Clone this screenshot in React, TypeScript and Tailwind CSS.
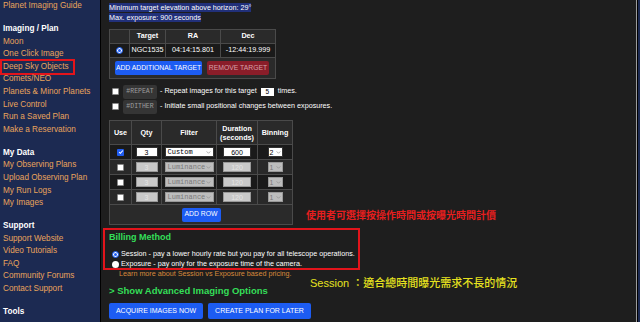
import { type ReactNode } from 'react'

const navGroups: { title?: string; items: string[] }[] = [
  { items: ['Planet Imaging Guide'] },
  {
    title: 'Imaging / Plan',
    items: [
      'Moon',
      'One Click Image',
      'Deep Sky Objects',
      'Comets/NEO',
      'Planets & Minor Planets',
      'Live Control',
      'Run a Saved Plan',
      'Make a Reservation',
    ],
  },
  {
    title: 'My Data',
    items: ['My Observing Plans', 'Upload Observing Plan', 'My Run Logs', 'My Images'],
  },
  {
    title: 'Support',
    items: ['Support Website', 'Video Tutorials', 'FAQ', 'Community Forums', 'Contact Support'],
  },
  { title: 'Tools', items: [] },
]

const filterRows = [
  { on: true, qty: '3', filter: 'Custom', dur: '600', bin: '2', bg: 'bg-[#1a1a1a]' },
  { on: false, qty: '3', filter: 'Luminance', dur: '120', bin: '1', bg: 'bg-[#292929]' },
  { on: false, qty: '3', filter: 'Luminance', dur: '120', bin: '1', bg: 'bg-[#1a1a1a]' },
  { on: false, qty: '3', filter: 'Luminance', dur: '120', bin: '1', bg: 'bg-[#292929]' },
]

function Sidebar() {
  return (
    <aside className="w-[101px] shrink-0 border-r border-black bg-[#1c2a52] pl-[3px] text-[8.2px] leading-[12.6px]">
      {navGroups.map((g, gi) => (
        <div key={gi} className={gi === 0 ? '' : 'mt-[10.4px]'}>
          {g.title && <div className="font-bold text-white">{g.title}</div>}
          {g.items.map((it) => (
            <div key={it} className="relative whitespace-nowrap text-[#e9a45c]">
              {it}
              {it === 'Deep Sky Objects' && (
                <span className="absolute -left-[3px] -top-[2px] h-[16px] w-[75px] border-2 border-[#e3141b]" />
              )}
            </div>
          ))}
        </div>
      ))}
    </aside>
  )
}

function Checkbox({ on }: { on: boolean }) {
  if (on)
    return (
      <span className="inline-flex h-[7px] w-[7px] items-center justify-center rounded-[1px] bg-[#1f5cf0]">
        <svg viewBox="0 0 8 8" className="h-[6px] w-[6px]">
          <path d="M1.5 4.2 L3.2 5.8 L6.5 2" stroke="white" strokeWidth="1.4" fill="none" />
        </svg>
      </span>
    )
  return <span className="inline-block h-[7px] w-[7px] rounded-[1px] border border-[#888] bg-white" />
}

function Radio({ on }: { on: boolean }) {
  return on ? (
    <span className="inline-block h-[7px] w-[7px] rounded-full border-[1.5px] border-[#2f6df5] bg-[#1f5cf0] ring-1 ring-white ring-inset" />
  ) : (
    <span className="inline-block h-[7px] w-[7px] rounded-full bg-white" />
  )
}

function Field({ children, on, className }: { children: ReactNode; on: boolean; className: string }) {
  return (
    <span
      className={`flex h-[10px] items-center justify-center border text-[7px] leading-none ${
        on ? 'border-[#333] bg-white text-black' : 'border-[#999] bg-[#c9c9c9] text-[#e4e4e4]'
      } ${className}`}
    >
      {children}
    </span>
  )
}

function Select({ value, on, className }: { value: string; on: boolean; className: string }) {
  return (
    <span
      className={`flex h-[10px] items-center justify-between border px-[2px] font-['Liberation_Mono',monospace] text-[7px] leading-none ${
        on ? 'border-[#333] bg-white text-black' : 'border-[#999] bg-[#bdbdbd] text-[#7a7a7a]'
      } ${className}`}
    >
      <span>{value}</span>
      <svg viewBox="0 0 6 4" className="h-[3px] w-[5px]">
        <path d="M0.5 0.5 L3 3 L5.5 0.5" stroke={on ? '#777' : '#888'} strokeWidth="0.8" fill="none" />
      </svg>
    </span>
  )
}

function Tag({ children }: { children: string }) {
  return (
    <span className="flex h-[14px] w-[34px] items-center justify-center rounded-[2px] bg-[#353535] font-['Liberation_Mono',monospace] text-[6.5px] text-[#9d9d9d]">
      {children}
    </span>
  )
}

export default function App() {
  return (
    <div className="flex h-[322px] w-[640px] overflow-hidden font-['Liberation_Sans',Arial,sans-serif]">
      <Sidebar />
      <main className="relative flex-1 bg-[#1e1e1e] pl-[8px] pt-[2.5px] text-[7.2px] text-white">
        <div className="leading-[10px]">
          <div>
            <span className="bg-[#21307a]">Minimum target elevation above horizon: 29°</span>
          </div>
          <div>
            <span className="bg-[#21307a]">Max. exposure: 900 seconds</span>
          </div>
        </div>

        <table className="mt-[6.5px] w-[166px] table-fixed border-collapse border border-[#4a4a4a] text-center">
          <colgroup>
            <col className="w-[20px]" />
            <col className="w-[36px]" />
            <col className="w-[55px]" />
            <col className="w-[55px]" />
          </colgroup>
          <thead>
            <tr className="h-[14px] bg-[#2a2a2a] font-bold">
              <th className="border border-[#4a4a4a]" />
              <th className="border border-[#4a4a4a]">Target</th>
              <th className="border border-[#4a4a4a]">RA</th>
              <th className="border border-[#4a4a4a]">Dec</th>
            </tr>
          </thead>
          <tbody>
            <tr className="h-[14px] bg-[#1a1a1a]">
              <td className="border border-[#4a4a4a]">
                <span className="flex justify-center">
                  <Radio on />
                </span>
              </td>
              <td className="border border-[#4a4a4a]">NGC1535</td>
              <td className="border border-[#4a4a4a]">04:14:15.801</td>
              <td className="border border-[#4a4a4a]">-12:44:19.999</td>
            </tr>
            <tr className="h-[21px] bg-[#2a2a2a]">
              <td colSpan={4} className="px-[5px]">
                <div className="flex gap-[5px]">
                  <span className="flex h-[14px] w-[87px] items-center justify-center rounded-[2px] bg-[#1d5cf2] text-[6.8px]">
                    ADD ADDITIONAL TARGET
                  </span>
                  <span className="flex h-[14px] w-[62px] items-center justify-center rounded-[2px] bg-[#8a1d29] text-[6.8px] text-[#d6a1a8]">
                    REMOVE TARGET
                  </span>
                </div>
              </td>
            </tr>
          </tbody>
        </table>

        <div className="mt-[5.5px] flex flex-col gap-[1px]">
          <div className="flex h-[14px] items-center gap-[4px] pl-[3px]">
            <Checkbox on={false} />
            <Tag>#REPEAT</Tag>
            <span className="ml-[-1px]">- Repeat images for this target</span>
            <span className="flex h-[8px] w-[13px] items-center justify-center bg-white text-[6.5px] text-black">5</span>
            <span>times.</span>
          </div>
          <div className="flex h-[14px] items-center gap-[4px] pl-[3px]">
            <Checkbox on={false} />
            <Tag>#DITHER</Tag>
            <span className="ml-[-1px]">- Initiate small positional changes between exposures.</span>
          </div>
        </div>

        <table className="mt-[6.5px] w-[183px] table-fixed border-collapse border border-[#4a4a4a] text-center">
          <colgroup>
            <col className="w-[22px]" />
            <col className="w-[30px]" />
            <col className="w-[55px]" />
            <col className="w-[41px]" />
            <col className="w-[35px]" />
          </colgroup>
          <thead>
            <tr className="h-[24px] bg-[#2a2a2a] font-bold leading-[9px]">
              <th className="border border-[#4a4a4a]">Use</th>
              <th className="border border-[#4a4a4a]">Qty</th>
              <th className="border border-[#4a4a4a]">Filter</th>
              <th className="border border-[#4a4a4a]">
                Duration
                <br />
                (seconds)
              </th>
              <th className="border border-[#4a4a4a]">Binning</th>
            </tr>
          </thead>
          <tbody>
            {filterRows.map((r, i) => (
              <tr key={i} className={`h-[15px] ${r.bg}`}>
                <td className="border border-[#4a4a4a]">
                  <span className="flex justify-center">
                    <Checkbox on={r.on} />
                  </span>
                </td>
                <td className="border border-[#4a4a4a]">
                  <Field on={r.on} className="mx-auto w-[22px]">
                    {r.qty}
                  </Field>
                </td>
                <td className="border border-[#4a4a4a]">
                  <Select on={r.on} value={r.filter} className="mx-auto w-[49px]" />
                </td>
                <td className="border border-[#4a4a4a]">
                  <Field on={r.on} className="mx-auto w-[28px]">
                    {r.dur}
                  </Field>
                </td>
                <td className="border border-[#4a4a4a]">
                  <Select on={r.on} value={r.bin} className="mx-auto w-[15px] !px-[1px] font-['Liberation_Sans',sans-serif]" />
                </td>
              </tr>
            ))}
            <tr className="h-[20px] bg-[#2a2a2a]">
              <td colSpan={5}>
                <span className="mx-auto flex h-[14px] w-[39px] items-center justify-center rounded-[2px] bg-[#1d5cf2] text-[6.8px]">
                  ADD ROW
                </span>
              </td>
            </tr>
          </tbody>
        </table>

        <div className="relative mt-[6px]">
          <span className="pointer-events-none absolute -left-[6px] -top-[3px] h-[42px] w-[257px] border-2 border-[#e3141b]" />
          <div className="text-[9px] font-bold leading-[12px] text-[#34de58]">Billing Method</div>
          <div className="mt-[6px] pl-[3px] leading-[10px]">
            <div className="flex items-center gap-[2px]">
              <Radio on />
              <span>Session - pay a lower hourly rate but you pay for all telescope operations.</span>
            </div>
            <div className="flex items-center gap-[2px]">
              <Radio on={false} />
              <span>Exposure - pay only for the exposure time of the camera.</span>
            </div>
            <div className="pl-[7px] text-[#d88a3c]">Learn more about Session vs Exposure based pricing.</div>
          </div>
        </div>

        <div className="mt-[6px] text-[9.5px] font-bold leading-[12px] text-[#34de58]">&gt; Show Advanced Imaging Options</div>

        <div className="mt-[6px] flex gap-[5px]">
          <span className="flex h-[16px] w-[94px] items-center justify-center rounded-[2px] bg-[#1d5cf2] text-[7px]">
            ACQUIRE IMAGES NOW
          </span>
          <span className="flex h-[16px] w-[103px] items-center justify-center rounded-[2px] bg-[#1d5cf2] text-[7px]">
            CREATE PLAN FOR LATER
          </span>
        </div>

        <div className="absolute left-[205px] top-[208px] whitespace-nowrap font-['Noto_Sans_CJK_TC',sans-serif] text-[10px] font-bold leading-[14px] text-[#e51e1e]">
          使用者可選擇按操作時間或按曝光時間計價
        </div>
        <div className="absolute left-[209px] top-[276px] whitespace-nowrap font-['Liberation_Sans','Noto_Sans_CJK_TC',sans-serif] text-[11px] font-medium leading-[15px] text-[#e6e21e]">
          Session ：適合總時間曝光需求不長的情況
        </div>
      </main>
      <div className="flex shrink-0">
        <div className="w-px bg-[#9c9c9c]" />
        <div className="w-px bg-black" />
        <div className="w-[2px] bg-[#1c2a52]" />
      </div>
    </div>
  )
}
